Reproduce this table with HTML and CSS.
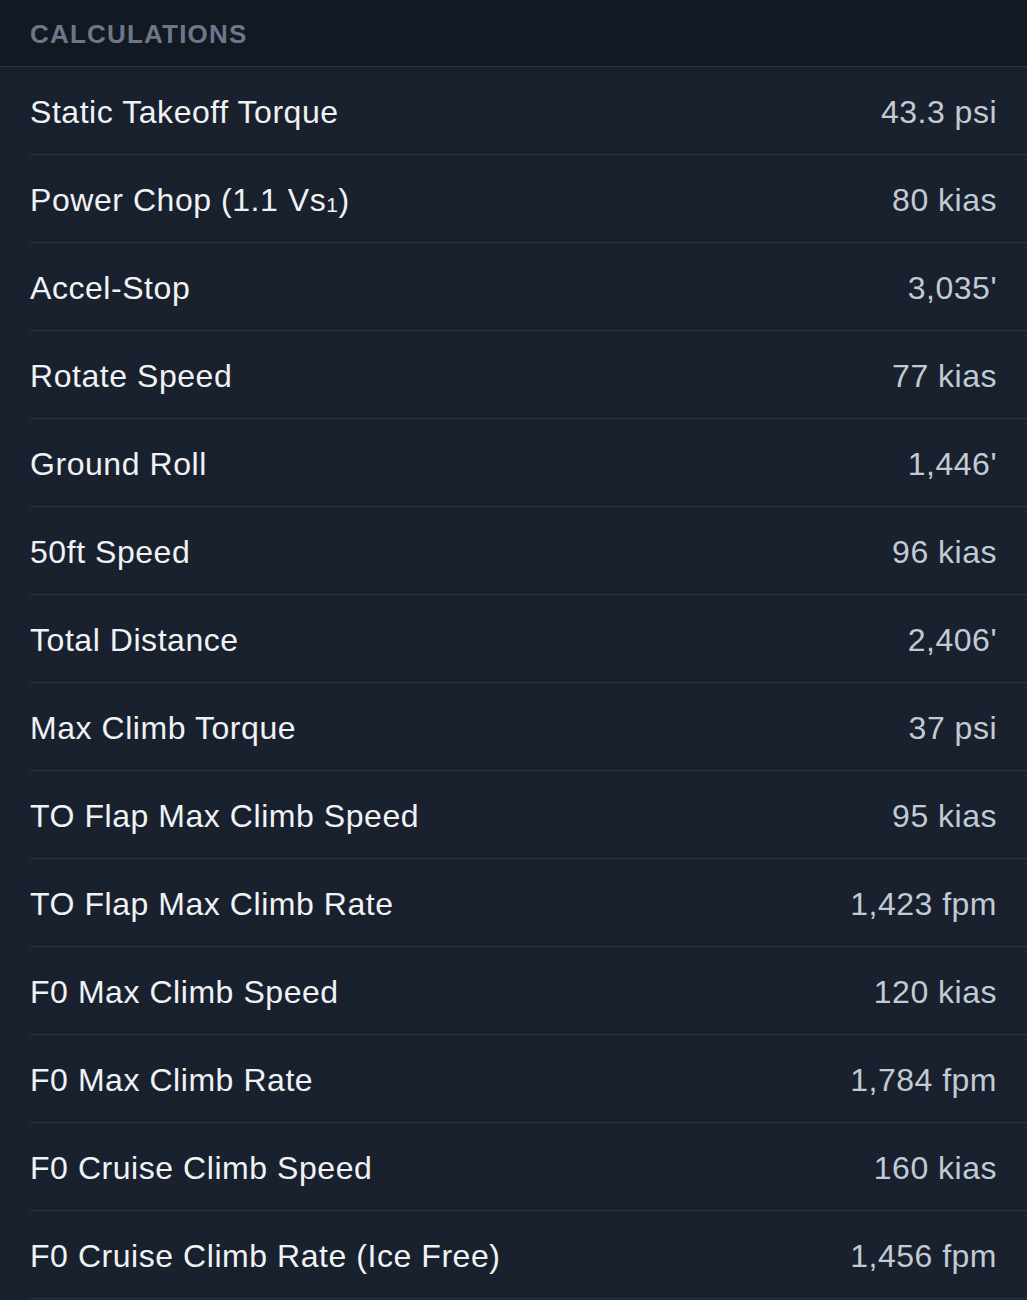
FILE: index.html
```html
<!DOCTYPE html>
<html>
<head>
<meta charset="utf-8">
<link rel="stylesheet" href="styles.css">
</head>
<body>
<div class="panel">
  <div class="header">CALCULATIONS</div>
  <ul class="list">
    <li class="row"><span class="label">Static Takeoff Torque</span><span class="value">43.3 psi</span></li>
    <li class="row"><span class="label">Power Chop (1.1 Vs<span class="sub">1</span>)</span><span class="value">80 kias</span></li>
    <li class="row"><span class="label">Accel-Stop</span><span class="value">3,035'</span></li>
    <li class="row"><span class="label">Rotate Speed</span><span class="value">77 kias</span></li>
    <li class="row"><span class="label">Ground Roll</span><span class="value">1,446'</span></li>
    <li class="row"><span class="label">50ft Speed</span><span class="value">96 kias</span></li>
    <li class="row"><span class="label">Total Distance</span><span class="value">2,406'</span></li>
    <li class="row"><span class="label">Max Climb Torque</span><span class="value">37 psi</span></li>
    <li class="row"><span class="label">TO Flap Max Climb Speed</span><span class="value">95 kias</span></li>
    <li class="row"><span class="label">TO Flap Max Climb Rate</span><span class="value">1,423 fpm</span></li>
    <li class="row"><span class="label">F0 Max Climb Speed</span><span class="value">120 kias</span></li>
    <li class="row"><span class="label">F0 Max Climb Rate</span><span class="value">1,784 fpm</span></li>
    <li class="row"><span class="label">F0 Cruise Climb Speed</span><span class="value">160 kias</span></li>
    <li class="row"><span class="label">F0 Cruise Climb Rate (Ice Free)</span><span class="value">1,456 fpm</span></li>
  </ul>
</div>
</body>
</html>
```
FILE: styles.css
```css
html, body {
  margin: 0;
  padding: 0;
  background: #19212e;
  font-family: "Liberation Sans", Arial, sans-serif;
}
.panel {
  width: 1027px;
  height: 1300px;
  overflow: hidden;
  background: #19212e;
}
.header {
  height: 67px;
  box-sizing: border-box;
  padding: 20px 0 0 30px;
  background: #121923;
  border-bottom: 1px solid #2a3441;
  color: #6c7888;
  font-size: 26px;
  font-weight: 700;
  letter-spacing: 1.2px;
  line-height: 28px;
}
.list {
  list-style: none;
  margin: 0;
  padding: 0 0 0 30px;
}
.row {
  height: 87px;
  border-bottom: 1px solid #2c3644;
  display: flex;
  align-items: center;
  justify-content: space-between;
  padding-right: 30px;
}
.label {
  color: #f1f2f4;
  font-size: 32px;
  line-height: 38px;
  letter-spacing: 0.55px;
  padding-top: 2px;
}
.value {
  color: #c3cad4;
  font-size: 32px;
  line-height: 38px;
  letter-spacing: 0.5px;
  padding-top: 2px;
}
.sub {
  font-size: 21px;
  line-height: 0;
  vertical-align: -1px;
}
```
